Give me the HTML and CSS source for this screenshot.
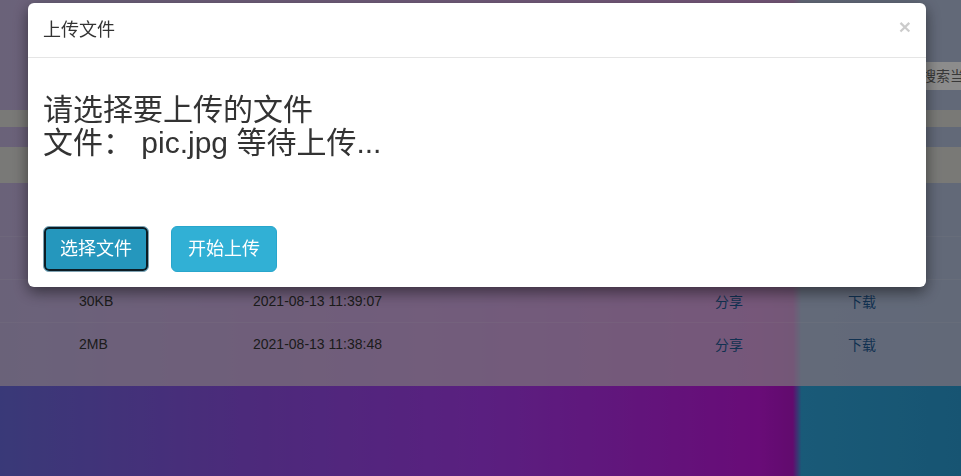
FILE: index.html
```html
<!DOCTYPE html>
<html lang="zh-CN">
<head>
    <meta charset="UTF-8">
    <title>文件列表</title>
    <link rel="stylesheet" href="styles.css">
</head>
<body>
    <div class="page">
        <div class="panel">
            <div class="toolbar">
                <input type="text" class="search" placeholder="搜索当前目录" />
            </div>
            <div class="crumb"></div>
            <div class="thead"></div>
            <div class="file-list">
                <div class="row"></div>
                <div class="row"></div>
                <div class="row">
                    <span class="col-size">30KB</span>
                    <span class="col-time">2021-08-13 11:39:07</span>
                    <a class="col-share" href="#">分享</a>
                    <a class="col-down" href="#">下载</a>
                </div>
                <div class="row">
                    <span class="col-size">2MB</span>
                    <span class="col-time">2021-08-13 11:38:48</span>
                    <a class="col-share" href="#">分享</a>
                    <a class="col-down" href="#">下载</a>
                </div>
            </div>
        </div>
    </div>

    <div class="backdrop"></div>

    <div class="modal">
        <div class="modal-header">
            <span class="modal-title">上传文件</span>
            <button class="close">&times;</button>
        </div>
        <div class="modal-body">
            <h2 class="status">请选择要上传的文件<br>文件： pic.jpg 等待上传...</h2>
            <div class="actions">
                <button class="btn btn-info focused">选择文件</button>
                <button class="btn btn-info">开始上传</button>
            </div>
        </div>
    </div>
</body>
</html>
```

FILE: styles.css
```css
html, body {
    margin: 0;
    height: 100%;
    overflow: hidden;
}
body {
    font-family: "Liberation Sans", "Noto Sans CJK SC", sans-serif;
    font-size: 14px;
    color: #333;
}
.page {
    min-height: 100%;
    background: linear-gradient(90deg, #6969da 0%, #8a4ee0 25%, #a43ae9 50%, #b424e0 68%, #bf16da 79%, #b214c8 82.5%, #2fa4da 83.4%, #2a9ad0 100%);
}
.panel {
    background: rgba(222, 202, 222, .76);
    padding: 62px 0 21px;
    overflow: hidden;
}
.toolbar {
    height: 28px;
    padding-left: 918px;
    overflow: hidden;
}
.search {
    box-sizing: border-box;
    width: 43px;
    height: 28px;
    border: 0;
    padding: 0 0 0 4px;
    font: 14px "Liberation Sans", "Noto Sans CJK SC", sans-serif;
    background: #fff;
}
.search::placeholder {
    color: #666;
}
.crumb {
    margin-top: 20px;
    height: 17px;
    background: rgba(222, 222, 216, .95);
}
.thead {
    margin-top: 20px;
    height: 36px;
    background: rgba(222, 222, 216, .95);
}
.file-list {
    margin-top: 10px;
}
.row {
    display: flex;
    align-items: center;
    height: 43px;
    border-top: 1px solid rgba(255, 255, 255, .12);
    box-sizing: border-box;
}
.row:first-child {
    border-top: 0;
}
.row a {
    color: #1f5a94;
    text-decoration: none;
}
.col-size {
    margin-left: 79px;
    width: 174px;
}
.col-time {
    width: 462px;
}
.col-share {
    width: 133px;
}
.backdrop {
    position: fixed;
    inset: 0;
    background: rgba(0, 0, 0, .45);
}
.modal {
    position: fixed;
    top: 3px;
    left: 28px;
    width: 898px;
    background: #fff;
    border-radius: 6px;
    box-shadow: 0 5px 15px rgba(0, 0, 0, .5);
}
.modal-header {
    display: flex;
    justify-content: space-between;
    align-items: flex-start;
    padding: 15px;
    border-bottom: 1px solid #e5e5e5;
}
.modal-title {
    font-size: 18px;
    line-height: 24px;
    color: #333;
}
.close {
    margin-top: -2px;
    padding: 0;
    border: 0;
    background: none;
    font: bold 21px/1 "Liberation Sans", sans-serif;
    color: #000;
    opacity: .2;
}
.modal-body {
    padding: 15px;
}
.status {
    margin: 20px 0 0;
    font-size: 30px;
    font-weight: normal;
    line-height: 33px;
    color: #333;
}
.actions {
    display: flex;
    gap: 22px;
    margin-top: 67px;
}
.btn {
    padding: 10px 16px;
    font: 18px/24px "Liberation Sans", "Noto Sans CJK SC", sans-serif;
    color: #fff;
    border: 1px solid #28a6cc;
    border-radius: 6px;
    cursor: pointer;
}
.btn-info {
    background-color: #31b0d5;
}
.btn-info.focused {
    background-color: #2597bd;
    border-color: #7fa2b2;
    box-shadow: inset 0 0 0 2px #0c1c24;
}
```
